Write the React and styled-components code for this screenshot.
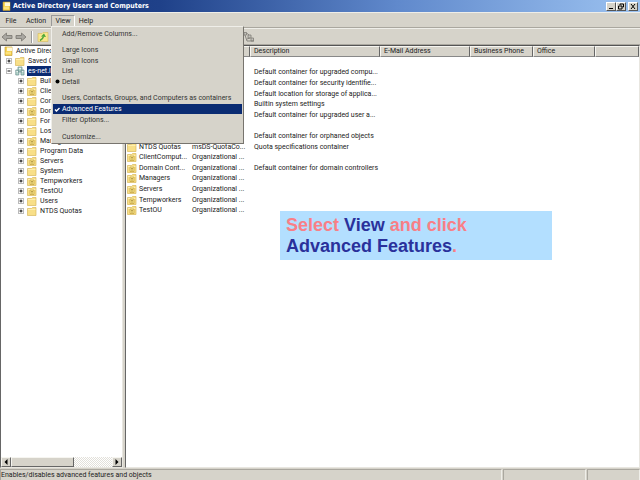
import React from "react";
import styled, { createGlobalStyle } from "styled-components";

const GlobalStyle = createGlobalStyle`
  * {
    box-sizing: border-box;
  }

  body {
    margin: 0;
    background: #d6d3ca;
    color: #222;
    font-family: Roboto, "Liberation Sans", sans-serif;
    font-size: 7px;
    line-height: 10px;
  }

  button {
    margin: 0;
    padding: 0;
    border: 0;
    background: none;
    color: inherit;
    font: inherit;
  }
`;

const Window = styled.div`
  display: flex;
  flex-direction: column;
  height: 100vh;
  overflow: hidden;
`;

const TitleBar = styled.header`
  display: flex;
  align-items: center;
  gap: 2px;
  height: 12px;
  padding: 0 2px;
  background: linear-gradient(90deg, #14337b 0%, #1f4189 25%, #6089cc 62%, #9cc2f0 100%);
`;

const Title = styled.h1`
  flex: 1;
  margin: 0;
  color: #fff;
  font-family: "DejaVu Sans Condensed", "DejaVu Sans", sans-serif;
  font-size: 7px;
  font-weight: bold;
  line-height: 12px;
`;

const WindowButton = styled.button`
  display: flex;
  width: 10px;
  height: 9px;
  margin-left: ${(props) => (props.$apart ? "0" : "-2px")};
  border: 1px solid;
  border-color: #fff #555 #555 #fff;
  background: #d6d3ca;
`;

const MenuBar = styled.nav`
  display: flex;
  height: 16px;
  padding: 2px 0 0 1px;
  border-top: 1px solid #efeee9;
  border-bottom: 1px solid #aaa79f;
`;

const MenuTitle = styled.button`
  width: ${(props) => props.$width}px;
  height: 12px;
  border: 1px solid;
  border-color: ${(props) => (props.$open ? "#999 #fff #fff #999" : "transparent")};
`;

const MenuHolder = styled.div`
  position: relative;
`;

const Dropdown = styled.div`
  position: absolute;
  z-index: 2;
  top: 11px;
  left: 0;
  width: 193px;
  padding: 1px;
  border: 1px solid;
  border-color: #efeee9 #77746e #77746e #efeee9;
  background: #d6d3ca;
`;

const MenuGroup = styled.div`
  display: flex;
  flex-direction: column;
  height: ${(props) => props.$height}px;

  & + & {
    margin-top: 6px;
    position: relative;
  }

  & + &::before {
    content: "";
    position: absolute;
    top: -4px;
    left: 0;
    right: 0;
    border-top: 1px solid #8d8a83;
    border-bottom: 1px solid #f6f5f0;
  }
`;

const MenuItem = styled.button`
  display: grid;
  grid-template-columns: 9px 1fr;
  align-items: center;
  flex: 1;
  min-height: 0;
  text-align: left;
  background: ${(props) => (props.$active ? "#0a2b72" : "transparent")};
  color: ${(props) => (props.$active ? "#fff" : "#333")};

  span {
    grid-column: 2;
  }

  svg {
    grid-row: 1;
    margin-left: 1px;
  }
`;

const Toolbar = styled.div`
  display: flex;
  align-items: center;
  gap: 2px;
  height: 17px;
  padding: 0 1px;
  border-top: 1px solid #efeee9;
  border-bottom: 1px solid #aaa79f;
`;

const ToolButton = styled.button`
  display: flex;
  height: 12px;
  margin-left: ${(props) => (props.$last ? "192px" : "0")};
`;

const Divider = styled.span`
  width: 2px;
  height: 12px;
  margin: 0 2px;
  border-left: 1px solid #999;
  border-right: 1px solid #fff;
`;

const Panes = styled.main`
  display: grid;
  grid-template-columns: 123px 1fr;
  gap: 2px;
  flex: 1;
  min-height: 0;
`;

const Pane = styled.section`
  display: flex;
  flex-direction: column;
  min-width: 0;
  overflow: hidden;
  border: 1px solid;
  border-color: #555 #e8e6e0 #e8e6e0 #666;
  background: #fff;
`;

const Tree = styled.ul`
  flex: 1;
  margin: 0;
  padding: 0 0 0 2px;
  list-style: none;
`;

const TreeRow = styled.li`
  display: flex;
  align-items: center;
  height: 10px;
  padding-left: ${(props) => props.$indent}px;
  white-space: nowrap;

  svg {
    flex: none;
  }
`;

const Toggle = styled.button`
  display: flex;
  margin-right: 3px;
`;

const TreeLabel = styled.span`
  margin-left: 2px;
  padding: 0 1px;
  background: ${(props) => (props.$selected ? "#0a2b72" : "transparent")};
  color: ${(props) => (props.$selected ? "#fff" : "inherit")};
`;

const ScrollBar = styled.div`
  display: flex;
  height: 10px;
  background: repeating-conic-gradient(#fff 0 25%, #e2e0da 0 50%) 0 0 / 2px 2px;
`;

const ScrollPart = styled.button`
  display: flex;
  align-items: center;
  justify-content: center;
  width: ${(props) => (props.$thumb ? "63px" : "10px")};
  margin-right: ${(props) => (props.$thumb ? "auto" : "0")};
  border: 1px solid;
  border-color: #f6f5f0 #666 #666 #f6f5f0;
  background: #d6d3ca;
`;

const Table = styled.table`
  width: 100%;
  table-layout: fixed;
  border-collapse: separate;
  border-spacing: 0;

  th {
    height: 11px;
    padding: 0 3px;
    border: 1px solid;
    border-color: #f6f5f0 #666 #888 #f6f5f0;
    background: #d6d3ca;
    font-weight: normal;
    line-height: 9px;
    text-align: left;
  }

  tbody {
    height: 159px;
  }

  td {
    height: 10px;
    padding: 0 0 0 4px;
    line-height: 9px;
    white-space: nowrap;
  }
`;

const Column = styled.col`
  width: ${(props) => props.$width}px;
`;

const NameCell = styled.div`
  display: flex;
  align-items: center;
  gap: 2px;
  margin-left: -3px;

  svg {
    flex: none;
  }
`;

const Callout = styled.p`
  position: absolute;
  top: 211px;
  left: 280px;
  width: 272px;
  margin: 0;
  padding: 4px 6px 3px;
  background: #b3dfff;
  color: #f87f87;
  font: bold 18px/21px "Liberation Sans", Arial, sans-serif;

  strong {
    color: #2a319b;
  }
`;

const StatusBar = styled.footer`
  display: grid;
  grid-template-columns: 1fr 83px 53px;
  gap: 1px;
  height: 12px;
  padding-top: 1px;
`;

const StatusCell = styled.div`
  border: 1px solid;
  border-color: #aaa79f #efeee9 #efeee9 #aaa79f;
`;

const FolderIcon = ({ unit }) => (
  <svg width="10" height="9" viewBox="0 0 10 9" aria-hidden="true">
    <path d="M.5 1.500h4l1-1h3.500v8h-8.500z" fill="#f8df88" stroke="#d9b95c" strokeWidth=".7" />
    <path d="M1 2.500h7.500" stroke="#fff3b8" strokeWidth=".8" />
    {unit && (
      <>
        <path d="M3 3h4v4.500H3z" fill="#fbe98c" stroke="#b8932f" strokeWidth=".6" />
        <path d="M4 4.500h2M4 6h2" stroke="#8d6d22" strokeWidth=".6" />
      </>
    )}
  </svg>
);

const ConsoleIcon = () => (
  <svg width="9" height="10" viewBox="0 0 9 10" aria-hidden="true">
    <path d="M1 1h7v8.500H1z" fill="#f8d558" stroke="#bd9327" strokeWidth=".6" />
    <path d="M3 1.500h5v3.500H3z" fill="#fff8d8" />
    <path d="M1.500 7h5.500" stroke="#fff0a3" />
  </svg>
);

const DomainIcon = () => (
  <svg width="10" height="10" viewBox="0 0 10 10" aria-hidden="true">
    <path d="M3 1h4v5H3zM.8 4h3v5h-3zM6 4h3v5H6z" fill="#b7d6cc" stroke="#668d8c" strokeWidth=".7" />
    <path d="M4 2.500h2M1.500 5.500h1.500M6.800 5.500h1.500" stroke="#fff" strokeWidth=".8" />
  </svg>
);

const ToggleIcon = ({ open }) => (
  <svg width="6" height="6" viewBox="0 0 6 6" aria-hidden="true">
    <rect x=".5" y=".5" width="5" height="5" fill="#fff" stroke="#bbb" />
    <path d={open ? "M1.500 3h3" : "M1.500 3h3M3 1.500v3"} stroke="#111" />
  </svg>
);

const ArrowIcon = ({ right }) => (
  <svg width="12" height="12" viewBox="0 0 12 12" aria-hidden="true">
    <path
      d={right ? "M11 6 6.500 2v2.500H1v3h5.500V10z" : "M1 6l4.500-4v2.500H11v3H5.500V10z"}
      fill="#a9a7a1"
      stroke="#77756f"
      strokeWidth=".8"
    />
  </svg>
);

const treeRows = [
  { label: "Buil" },
  { label: "Clie", unit: true },
  { label: "Com" },
  { label: "Dom", unit: true },
  { label: "For" },
  { label: "Lost" },
  { label: "Manag", unit: true },
  { label: "Program Data" },
  { label: "Servers", unit: true },
  { label: "System" },
  { label: "Tempworkers", unit: true },
  { label: "TestOU", unit: true },
  { label: "Users" },
  { label: "NTDS Quotas" },
];

const listRows = [
  {},
  { description: "Default container for upgraded compu..." },
  { description: "Default container for security identifie..." },
  { description: "Default location for storage of applica..." },
  { description: "Builtin system settings" },
  { description: "Default container for upgraded user a..." },
  {},
  { description: "Default container for orphaned objects" },
  { name: "NTDS Quotas", type: "msDS-QuotaCo...", description: "Quota specifications container" },
  { name: "ClientComput...", type: "Organizational ...", unit: true },
  {
    name: "Domain Cont...",
    type: "Organizational ...",
    description: "Default container for domain controllers",
    unit: true,
  },
  { name: "Managers", type: "Organizational ...", unit: true },
  { name: "Servers", type: "Organizational ...", unit: true },
  { name: "Tempworkers", type: "Organizational ...", unit: true },
  { name: "TestOU", type: "Organizational ...", unit: true },
];

function ViewMenu() {
  return (
    <MenuHolder>
      <MenuTitle $width={24} $open>
        View
      </MenuTitle>
      <Dropdown>
        <MenuGroup $height={11}>
          <MenuItem><span>Add/Remove Columns...</span></MenuItem>
        </MenuGroup>
        <MenuGroup $height={42}>
          <MenuItem><span>Large Icons</span></MenuItem>
          <MenuItem><span>Small Icons</span></MenuItem>
          <MenuItem><span>List</span></MenuItem>
          <MenuItem>
            <svg width="7" height="7" viewBox="0 0 7 7" aria-hidden="true">
              <circle cx="3.500" cy="3.500" r="2" fill="#000" />
            </svg>
            <span>Detail</span>
          </MenuItem>
        </MenuGroup>
        <MenuGroup $height={32}>
          <MenuItem><span>Users, Contacts, Groups, and Computers as containers</span></MenuItem>
          <MenuItem $active>
            <svg width="7" height="7" viewBox="0 0 7 7" aria-hidden="true">
              <path d="M1 3.500l1.500 1.500 3-3" fill="none" stroke="#fff" strokeWidth="1.400" />
            </svg>
            <span>Advanced Features</span>
          </MenuItem>
          <MenuItem><span>Filter Options...</span></MenuItem>
        </MenuGroup>
        <MenuGroup $height={11}>
          <MenuItem><span>Customize...</span></MenuItem>
        </MenuGroup>
      </Dropdown>
    </MenuHolder>
  );
}

function DirectoryTree() {
  return (
    <Pane>
      <Tree>
        <TreeRow $indent={1}>
          <ConsoleIcon />
          <TreeLabel>Active Direc</TreeLabel>
        </TreeRow>
        <TreeRow $indent={3}>
          <Toggle aria-label="Expand saved queries"><ToggleIcon /></Toggle>
          <FolderIcon />
          <TreeLabel>Saved Q</TreeLabel>
        </TreeRow>
        <TreeRow $indent={3}>
          <Toggle aria-label="Collapse domain"><ToggleIcon open /></Toggle>
          <DomainIcon />
          <TreeLabel $selected>es-net.l</TreeLabel>
        </TreeRow>
        {treeRows.map((row) => (
          <TreeRow key={row.label} $indent={15}>
            <Toggle aria-label={"Expand " + row.label}><ToggleIcon /></Toggle>
            <FolderIcon unit={row.unit} />
            <TreeLabel>{row.label}</TreeLabel>
          </TreeRow>
        ))}
      </Tree>
      <ScrollBar>
        <ScrollPart aria-label="Scroll left">
          <svg width="4" height="6" viewBox="0 0 4 6"><path d="M3.500 0v6L.5 3z" /></svg>
        </ScrollPart>
        <ScrollPart $thumb aria-label="Scroll position" />
        <ScrollPart aria-label="Scroll right">
          <svg width="4" height="6" viewBox="0 0 4 6"><path d="M.5 0v6l3-3z" /></svg>
        </ScrollPart>
      </ScrollBar>
    </Pane>
  );
}

function ObjectList() {
  return (
    <Pane>
      <Table>
        <colgroup>
          <Column $width={62} />
          <Column $width={62} />
          <Column $width={130} />
          <Column $width={90} />
          <Column $width={63} />
          <Column $width={62} />
          <col />
        </colgroup>
        <thead>
          <tr>
            <th>Name</th>
            <th>Type</th>
            <th>Description</th>
            <th>E-Mail Address</th>
            <th>Business Phone</th>
            <th>Office</th>
            <th></th>
          </tr>
        </thead>
        <tbody>
          {listRows.map((row, index) => (
            <tr key={index}>
              <td>
                {row.name && (
                  <NameCell>
                    <FolderIcon unit={row.unit} />
                    {row.name}
                  </NameCell>
                )}
              </td>
              <td>{row.type}</td>
              <td colSpan={5}>{row.description}</td>
            </tr>
          ))}
        </tbody>
      </Table>
    </Pane>
  );
}

function App() {
  return (
    <Window>
      <GlobalStyle />
      <TitleBar>
        <ConsoleIcon />
        <Title>Active Directory Users and Computers</Title>
        <WindowButton aria-label="Minimize">
          <svg width="8" height="7" viewBox="0 0 8 7"><path d="M2 5.500h4" stroke="#000" /></svg>
        </WindowButton>
        <WindowButton aria-label="Restore">
          <svg width="8" height="7" viewBox="0 0 8 7">
            <path d="M3 2V1h3.500v3H5.500M1.500 3h3.500v3H1.500z" fill="none" stroke="#000" />
          </svg>
        </WindowButton>
        <WindowButton $apart aria-label="Close">
          <svg width="8" height="7" viewBox="0 0 8 7"><path d="M2 1l4 5M6 1L2 6" stroke="#000" /></svg>
        </WindowButton>
      </TitleBar>
      <MenuBar>
        <MenuTitle $width={20}>File</MenuTitle>
        <MenuTitle $width={30}>Action</MenuTitle>
        <ViewMenu />
        <MenuTitle $width={22}>Help</MenuTitle>
      </MenuBar>
      <Toolbar>
        <ToolButton aria-label="Back"><ArrowIcon /></ToolButton>
        <ToolButton aria-label="Forward"><ArrowIcon right /></ToolButton>
        <Divider />
        <ToolButton aria-label="Up one level">
          <svg width="12" height="12" viewBox="0 0 12 12">
            <path d="M1 2.500h4l1-1h5v9H1z" fill="#f8e68c" stroke="#d5ba5a" strokeWidth=".6" />
            <path d="M3 9.500c2-1 3-2 3.500-4" fill="none" stroke="#4da83a" strokeWidth="1.400" />
            <path d="M4 5.500l3-3 2 3.500z" fill="#4da83a" />
          </svg>
        </ToolButton>
        <ToolButton $last aria-label="Add to group">
          <svg width="12" height="12" viewBox="0 0 12 12">
            <path
              d="M1 1.500h2.500v2.500H1zM5 4h3v3H5zM8 7h2.500v3H8z"
              fill="#c4c2bc"
              stroke="#807d77"
              strokeWidth=".8"
            />
            <path d="M2 4l2 6h7M3.500 2L6 4M4 8l3-1" fill="none" stroke="#807d77" strokeWidth=".9" />
          </svg>
        </ToolButton>
      </Toolbar>
      <Panes>
        <DirectoryTree />
        <ObjectList />
      </Panes>
      <StatusBar>
        <StatusCell>Enables/disables advanced features and objects</StatusCell>
        <StatusCell />
        <StatusCell />
      </StatusBar>
      <Callout>
        Select <strong>View</strong> and click
        <br />
        <strong>Advanced Features</strong>.
      </Callout>
    </Window>
  );
}

export default App;
